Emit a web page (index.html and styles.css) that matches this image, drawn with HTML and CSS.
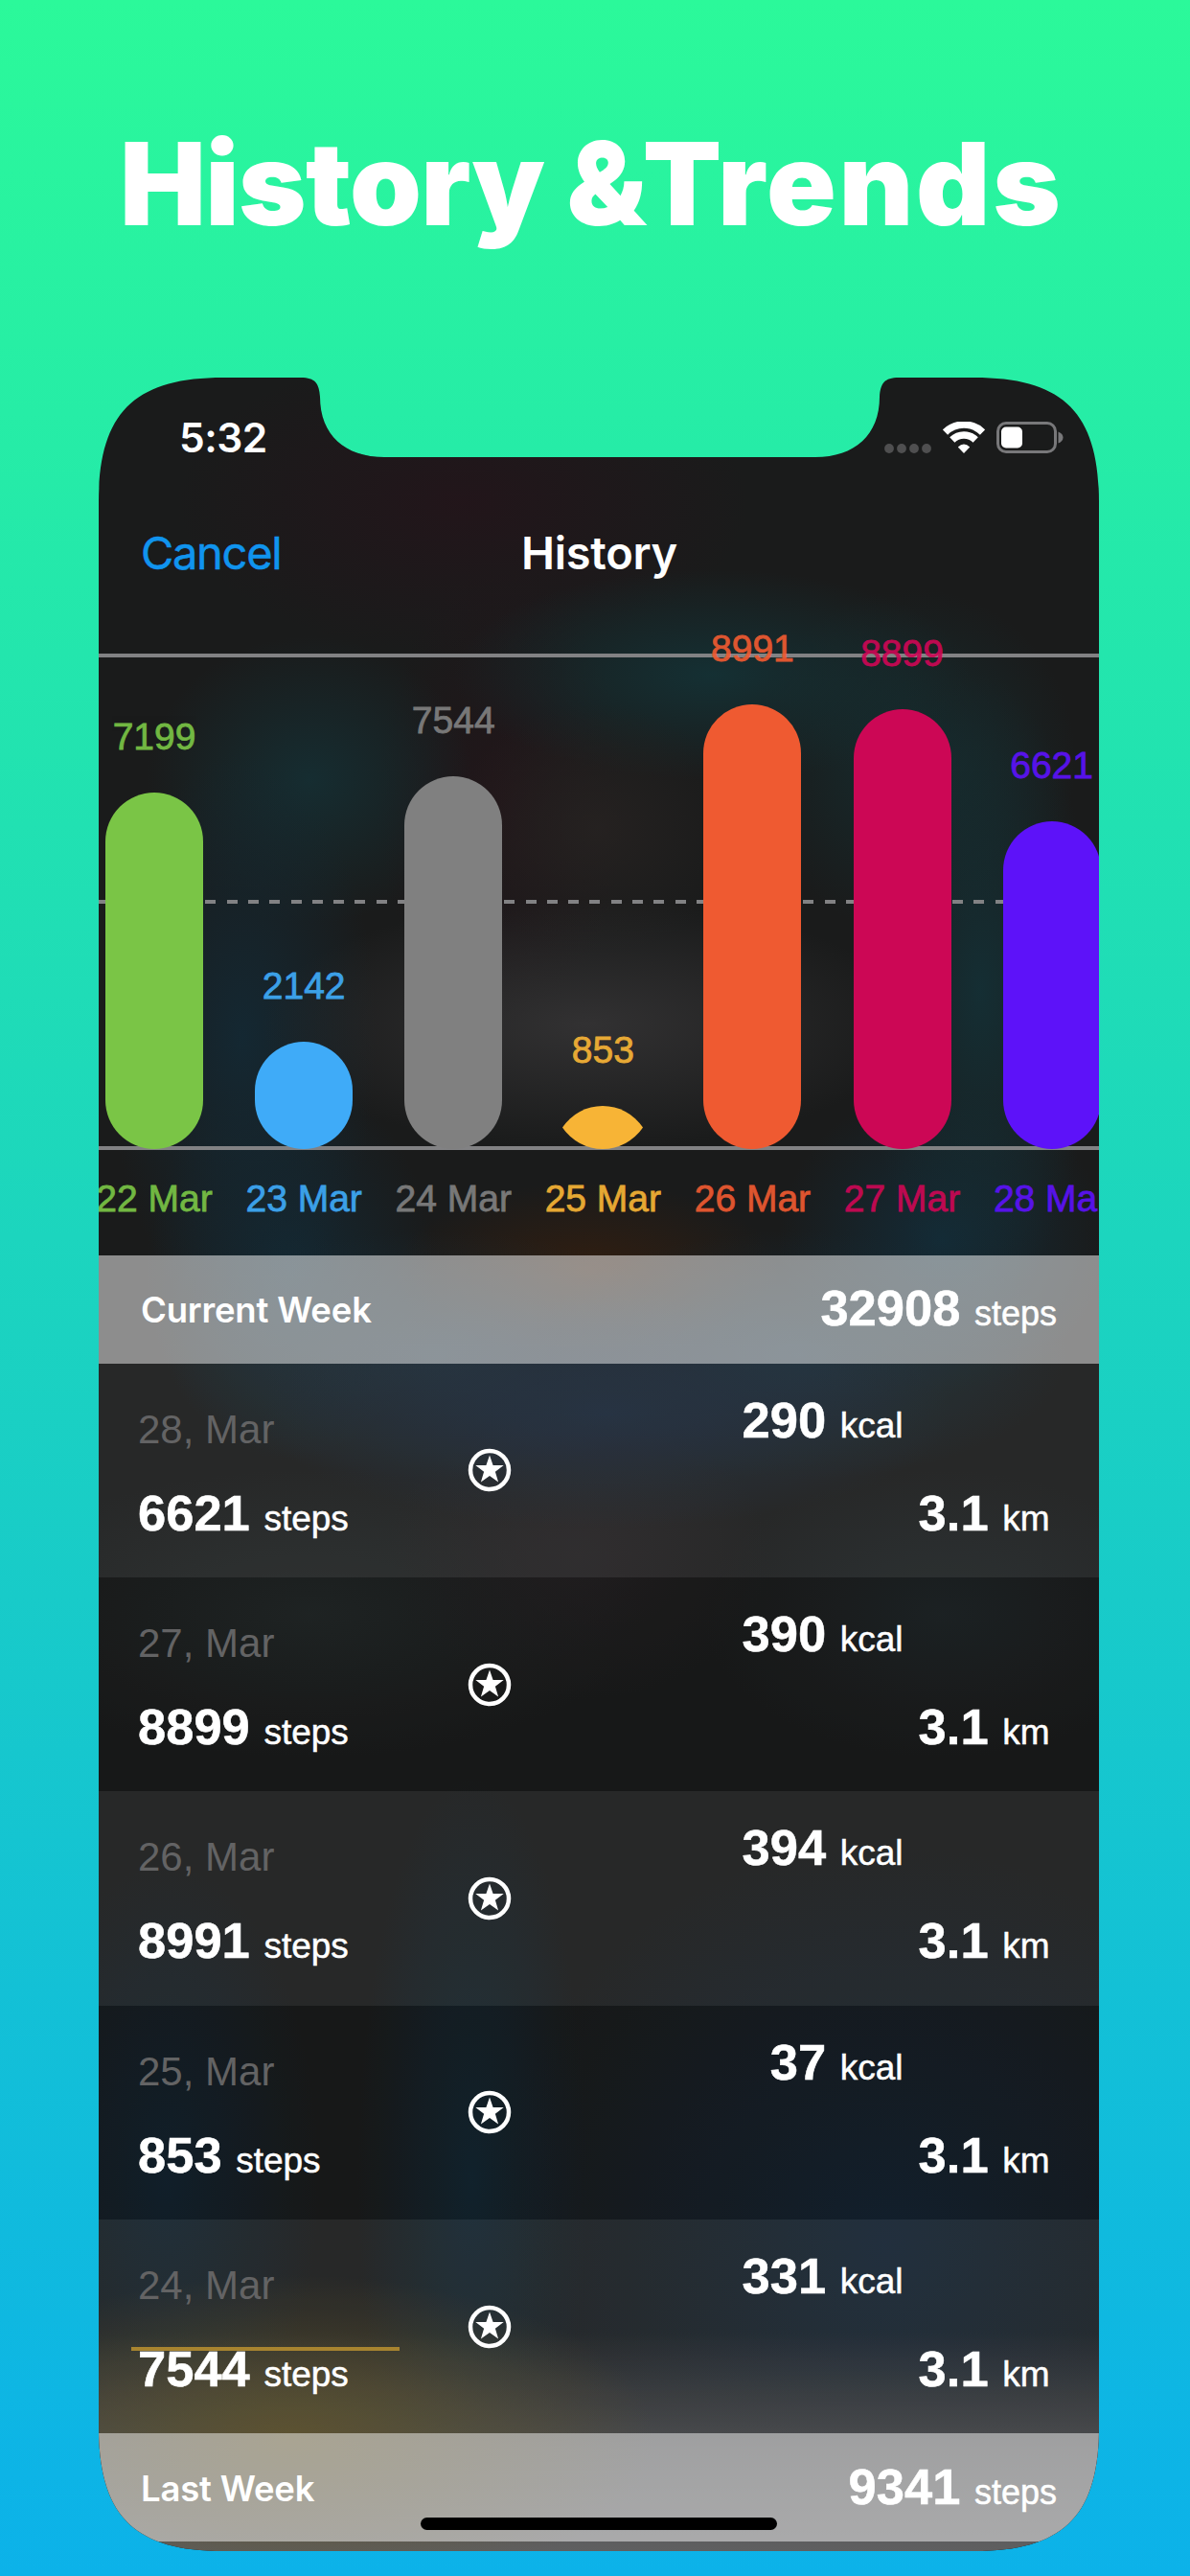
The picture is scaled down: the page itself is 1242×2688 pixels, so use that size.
FILE: index.html
```html
<!DOCTYPE html>
<html lang="en">

<head>
    <meta charset="UTF-8">
    <meta name="viewport" content="width=device-width, initial-scale=1.0">
    <title>History &amp; Trends</title>
    <link rel="stylesheet" href="styles.css">
</head>

<body>
    <h1 class="title">History <span>&amp;Trends</span></h1>

    <div class="phone">
        <div class="status-bar">
            <span class="time">5:32</span>
            <div class="status-icons">
                <svg class="dots" width="50" height="10" viewBox="0 0 50 10">
                    <circle cx="5" cy="5" r="4.9" />
                    <circle cx="18" cy="5" r="4.9" />
                    <circle cx="31" cy="5" r="4.9" />
                    <circle cx="44" cy="5" r="4.9" />
                </svg>
                <svg class="wifi" width="44" height="33" viewBox="0 0 44 33">
                    <path d="M2.500 11A28 28 0 0 1 41.500 11" />
                    <path d="M9.800 19A17.500 17.500 0 0 1 34.200 19" />
                    <path class="wifi-dot" d="M22 33L15.800 26.400Q22 20.600 28.200 26.400Z" />
                </svg>
                <svg class="battery" width="70" height="33" viewBox="0 0 70 33">
                    <rect class="battery-case" x="1.500" y="1.500" width="60" height="30" rx="8.500" />
                    <rect class="battery-level" x="5" y="5.500" width="22" height="22" rx="5" />
                    <path class="battery-cap" d="M64.500 10.500Q69.500 12.500 69.500 16.500Q69.500 20.500 64.500 22.500Z" />
                </svg>
            </div>
        </div>

        <div class="nav-bar">
            <a class="cancel">Cancel</a>
            <h2>History</h2>
        </div>

        <div class="chart">
            <div class="grid-lines"></div>
            <div class="bars">
                <div class="day green"><span class="value">7199</span><div class="bar" style="height: 372px"></div></div>
                <div class="day blue"><span class="value">2142</span><div class="bar" style="height: 112px"></div></div>
                <div class="day gray"><span class="value">7544</span><div class="bar" style="height: 389px"></div></div>
                <div class="day yellow"><span class="value">853</span><svg class="lens" width="84" height="45" viewBox="0 0 84 45"><path d="M0 22.500A50.500 50.500 0 0 1 84 22.500A50.500 50.500 0 0 1 0 22.500Z" /></svg></div>
                <div class="day orange"><span class="value">8991</span><div class="bar" style="height: 464px"></div></div>
                <div class="day pink"><span class="value">8899</span><div class="bar" style="height: 459px"></div></div>
                <div class="day purple"><span class="value">6621</span><div class="bar" style="height: 342px"></div></div>
            </div>
            <div class="dates">
                <span class="green">22 Mar</span>
                <span class="blue">23 Mar</span>
                <span class="gray">24 Mar</span>
                <span class="yellow">25 Mar</span>
                <span class="orange">26 Mar</span>
                <span class="pink">27 Mar</span>
                <span class="purple">28 Mar</span>
            </div>
        </div>

        <div class="week">
            <span class="week-name">Current Week</span>
            <span class="amount"><b>32908 </b>steps</span>
        </div>

        <div id="rows"></div>

        <div class="week">
            <span class="week-name">Last Week</span>
            <span class="amount"><b>9341 </b>steps</span>
        </div>
        <div class="next-row"></div>
        <div class="home-indicator"></div>
    </div>

    <script>
        const days = [
            { date: '28, Mar', steps: 6621, kcal: 290, km: '3.1' },
            { date: '27, Mar', steps: 8899, kcal: 390, km: '3.1' },
            { date: '26, Mar', steps: 8991, kcal: 394, km: '3.1' },
            { date: '25, Mar', steps: 853, kcal: 37, km: '3.1' },
            { date: '24, Mar', steps: 7544, kcal: 331, km: '3.1', goalLine: true }
        ];

        document.getElementById('rows').innerHTML = days.map(day => `
            <div class="row">
                <div class="left">
                    <span class="date">${day.date}</span>
                    <span class="amount"><b>${day.steps} </b>steps</span>
                    ${day.goalLine ? '<div class="goal-line"></div>' : ''}
                </div>
                <svg class="star" width="46" height="46" viewBox="-23 -23 46 46">
                    <circle r="20" />
                    <path d="M0 -15.500L3.600 -5H14.700L5.900 1.800L9.100 12.500L0 6.100L-9.100 12.500L-5.900 1.800L-14.700 -5H-3.600Z" />
                </svg>
                <div class="right">
                    <span class="amount kcal"><b>${day.kcal} </b>kcal</span>
                    <span class="amount km"><b>${day.km} </b>km</span>
                </div>
            </div>
        `).join('');
    </script>
</body>

</html>
```
FILE: styles.css
```css
* {
    box-sizing: border-box;
}

body {
    margin: 0;
    height: 2688px;
    overflow: hidden;
    background: linear-gradient(#2bf99a 0%, #26eda6 16%, #1cd5be 48%, #18cbc9 62%, #0db4e6 96%, #0cb2e9 100%);
    color: #fff;
    font-family: "Liberation Sans", Arial, sans-serif;
}

.title {
    margin: 0;
    height: 394px;
    padding: 120px 0 0 125px;
    font: 900 120px/144px Inter, sans-serif;
    letter-spacing: -0.7px;
    white-space: nowrap;
}

.title span {
    letter-spacing: 2.7px;
}

.phone {
    position: relative;
    width: 1044px;
    height: 2268px;
    margin-left: 103px;
    display: flex;
    flex-direction: column;
    /* screen outline with the notch cut out */
    clip-path: path("M0 130C0 37 37 0 130 0H211C226 0 230 6 231 20C231 60 257 83 298 83H748C789 83 815 60 815 20C816 6 820 0 835 0H914C1007 0 1044 37 1044 130V2138C1044 2231 1007 2268 914 2268H130C37 2268 0 2231 0 2138Z");
    /* blurred picture showing through the screen */
    background:
        radial-gradient(ellipse 380px 170px at 200px 2150px, rgba(86, 74, 32, 0.85), transparent),
        linear-gradient(transparent 2040px, #414244 2160px, #555557 2268px),
        radial-gradient(ellipse 420px 420px at 820px 1950px, rgba(20, 36, 52, 0.9), transparent),
        radial-gradient(ellipse 120px 420px at 390px 1880px, rgba(18, 40, 54, 0.8), transparent),
        radial-gradient(ellipse 160px 330px at 70px 1880px, rgba(18, 36, 50, 0.85), transparent),
        radial-gradient(ellipse 360px 120px at 530px 1080px, rgba(26, 40, 58, 0.9), transparent),
        radial-gradient(ellipse 280px 130px at 350px 1020px, rgba(25, 44, 55, 0.8), transparent),
        radial-gradient(ellipse 280px 130px at 730px 1020px, rgba(22, 44, 56, 0.85), transparent),
        radial-gradient(ellipse 200px 90px at 510px 930px, rgba(50, 30, 16, 0.95), transparent),
        radial-gradient(ellipse 340px 130px at 510px 675px, rgba(50, 49, 50, 1), transparent),
        radial-gradient(ellipse 150px 130px at 520px 470px, rgba(38, 34, 33, 0.9), transparent),
        radial-gradient(ellipse 140px 300px at 150px 690px, rgba(19, 42, 54, 0.85), transparent),
        radial-gradient(ellipse 170px 150px at 220px 420px, rgba(21, 48, 53, 0.85), transparent),
        radial-gradient(ellipse 150px 200px at 200px 930px, rgba(19, 42, 54, 0.85), transparent),
        radial-gradient(ellipse 270px 110px at 640px 310px, rgba(20, 50, 54, 0.9), transparent),
        radial-gradient(ellipse 170px 180px at 850px 400px, rgba(20, 50, 54, 0.7), transparent),
        radial-gradient(ellipse 120px 330px at 920px 640px, rgba(20, 48, 54, 0.9), transparent),
        radial-gradient(ellipse 170px 160px at 880px 900px, rgba(19, 44, 57, 0.9), transparent),
        radial-gradient(ellipse 300px 160px at 380px 130px, rgba(36, 20, 26, 0.8), transparent),
        radial-gradient(ellipse 130px 240px at 420px 440px, rgba(34, 21, 25, 0.9), transparent),
        radial-gradient(ellipse 200px 150px at 500px 1230px, rgba(38, 34, 36, 0.8), transparent),
        radial-gradient(ellipse 350px 150px at 220px 1290px, rgba(35, 40, 40, 0.9), transparent),
        radial-gradient(ellipse 250px 150px at 880px 1290px, rgba(32, 38, 40, 0.9), transparent),
        #1a1b1b;
}

.phone h2,
.phone a,
.phone span {
    white-space: nowrap;
}

.status-bar {
    height: 118px;
    padding: 37px 38px 0 84px;
    display: flex;
    justify-content: space-between;
}

.time {
    font: 600 42.500px/52px Inter, sans-serif;
    letter-spacing: -0.5px;
}

.status-icons {
    height: 33px;
    margin-top: 9px;
    display: flex;
    align-items: flex-end;
}

.dots {
    fill: #4f4f50;
    margin-right: 11px;
}

.wifi {
    fill: none;
    stroke: #fff;
    stroke-width: 7.5;
    margin-right: 12px;
}

.wifi-dot {
    fill: #fff;
    stroke: none;
}

.battery {
    margin-right: -1px;
}

.battery-case {
    fill: none;
    stroke: #78787a;
    stroke-width: 3;
}

.battery-level {
    fill: #fff;
}

.battery-cap {
    fill: #78787a;
}

.nav-bar {
    height: 170px;
    padding: 37px 43px 0 44px;
    display: grid;
    grid-template-columns: 1fr auto 1fr;
    font: 400 47px/56px Inter, sans-serif;
    letter-spacing: -1.3px;
}

.cancel {
    color: #1094ee;
    -webkit-text-stroke: 0.5px;
}

.nav-bar h2 {
    margin: 0;
    font-size: 47px;
    font-weight: 600;
    letter-spacing: -0.3px;
}

.chart {
    position: relative;
    height: 628px;
    flex-shrink: 0;
}

.grid-lines {
    height: 518px;
    border-top: 4px solid #828284;
    border-bottom: 4px solid #828284;
    background: repeating-linear-gradient(90deg, #828284 0 11px, transparent 11px 22.28px) 0 253px / 100% 4px no-repeat;
}

/* columns lie over the grid lines and run past the right edge */
.bars {
    position: absolute;
    left: -20px;
    top: -60px;
    display: flex;
    height: 577px;
}

.day {
    width: 156.100px;
    display: flex;
    flex-direction: column;
    align-items: center;
    justify-content: flex-end;
}

.value {
    font-size: 39px;
    line-height: 44px;
    margin-bottom: 36px;
    opacity: 0.92;
    -webkit-text-stroke: 0.8px;
}

.bar {
    width: 102px;
    border-radius: 51px;
    background: currentColor;
}

.lens {
    fill: currentColor;
}

.dates {
    display: flex;
    margin-left: -20px;
    width: 1093px;
    padding-top: 29px;
    font-size: 39px;
    line-height: 44px;
    -webkit-text-stroke: 0.8px;
}

.dates span {
    width: 156.100px;
    flex-shrink: 0;
    text-align: center;
    opacity: 0.92;
}

.green { color: #7ac546; }
.blue { color: #3fabf8; }
.gray { color: #808080; }
.yellow { color: #f7b436; }
.orange { color: #ef5a31; }
.pink { color: #cc0755; }
.purple { color: #5d12f9; }

.week {
    height: 112.500px;
    padding: 2px 44px 0;
    display: flex;
    align-items: center;
    justify-content: space-between;
    background: rgba(255, 255, 255, 0.5);
}

.week-name {
    font: 600 36.500px/44px Inter, sans-serif;
    letter-spacing: -0.2px;
}

.amount {
    font-size: 37px;
    line-height: 60px;
    -webkit-text-stroke: 0.5px;
}

.amount b {
    font-size: 52.500px;
    white-space: pre;
}

.week .amount {
    padding-top: 2px;
    font-size: 36px;
}

.row {
    height: 223.400px;
    padding: 0 51.500px 0 41px;
    display: flex;
    align-items: center;
}

.row:nth-child(odd) {
    background: rgba(255, 255, 255, 0.06);
}

.row:nth-child(even) {
    background: rgba(0, 0, 0, 0.1);
}

.left {
    position: relative;
    width: 344px;
    height: 100%;
    padding-top: 45px;
    display: flex;
    flex-direction: column;
}

.date {
    color: #636364;
    font-size: 42px;
    line-height: 48px;
    margin-bottom: 33px;
}

.goal-line {
    position: absolute;
    left: -7px;
    top: 133px;
    width: 280px;
    height: 4px;
    background: #a8842f;
}

.star {
    fill: #fff;
}

.star circle {
    fill: none;
    stroke: #fff;
    stroke-width: 4.500;
}

.right {
    flex: 1;
    height: 100%;
    padding-top: 29px;
    display: flex;
    flex-direction: column;
    align-items: flex-end;
}

.kcal {
    margin-right: 153px;
    margin-bottom: 36px;
}

.km {
    margin-top: -5px;
}

.next-row {
    flex: 1;
    background: rgba(255, 255, 255, 0.06);
}

.home-indicator {
    position: absolute;
    left: 336px;
    top: 2233px;
    width: 372px;
    height: 13px;
    border-radius: 7px;
    background: #000;
}
```
